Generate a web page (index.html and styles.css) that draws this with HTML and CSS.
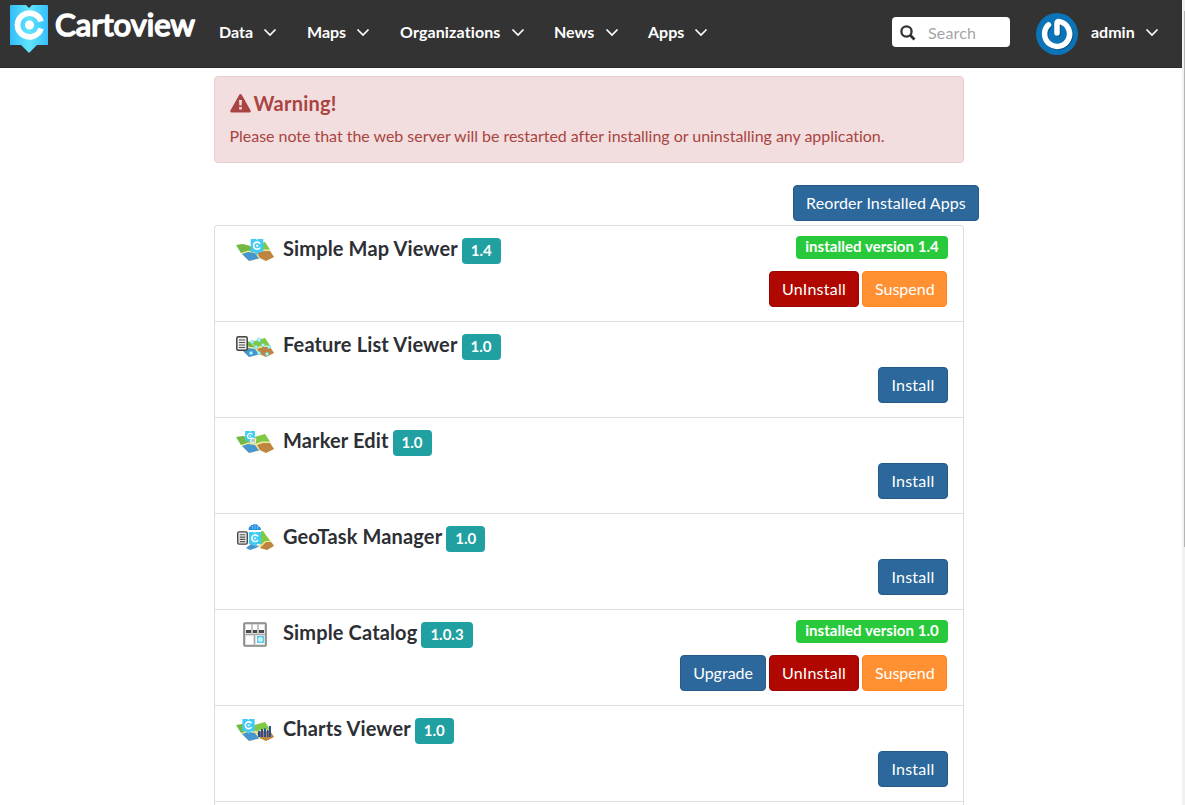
FILE: index.html
```html
<!DOCTYPE html>
<html lang="en">
<head>
<meta charset="utf-8">
<title>Cartoview</title>
<link rel="stylesheet" href="styles.css">
</head>
<body>
<svg class="defs" width="0" height="0">
  <defs>
    <linearGradient id="sky" x1="0" x2="1"><stop offset="0" stop-color="#32bdfa"/><stop offset=".5" stop-color="#61e4fc"/><stop offset="1" stop-color="#35bffb"/></linearGradient>
    <symbol id="chev" viewBox="0 0 14 9"><path d="M1.5 1.5 7 7l5.500-5.500" fill="none" stroke="#fff" stroke-width="1.700"/></symbol>
    <symbol id="pin" viewBox="0 0 38 48"><path d="M0 1Q0 0 1 0H16L19 3 22 0H37Q38 0 38 1V40H27L19 48 11 40H0Z" fill="url(#sky)"/><path d="M31 16.500A12 11.800 0 1 0 31 23.500" fill="none" stroke="#fff" stroke-width="5.800"/><circle cx="19.500" cy="20" r="4.500" fill="#fff"/></symbol>
    <symbol id="smallpin" viewBox="0 0 13 16"><path d="M0 0H5.500L6.500 1 7.500 0H13V13H9L6.500 16 4 13H0Z" fill="#3fcbf5"/><path d="M9.700 4.700A3.600 3.600 0 1 0 9.700 8.600" fill="none" stroke="#fff" stroke-width="1.700"/><circle cx="6.700" cy="6.700" r="1.200" fill="#e7fbff"/></symbol>
    <symbol id="map" viewBox="0 0 38 26"><path d="M1 7 7 6 14 8 29 4 38 19 30 23 23 20.500 13 23 5 15Z" fill="#f0e8a0"/><path d="M0 7 7 6 14 8 19 13.500 12 12.500 5 15Z" fill="#72b944"/><path d="M15 8 29 4 34 11.500 26 11.500 20 13.500Z" fill="#80c946"/><path d="M6 16 12 14 19 15 23 20.500 13 23Z" fill="#4595ce"/><path d="M21 15 27 13 34 13 38 19 30 23 24 20Z" fill="#bd8540"/></symbol>
    <symbol id="doc" viewBox="0 0 12 15"><rect x=".8" y=".8" width="10.400" height="13.400" rx="1.500" fill="#e9e9e9" stroke="#444" stroke-width="1.500"/><path d="M3 4H9M3 6.500H9M3 9H9M3 11.500H9" stroke="#555" stroke-width="1.200"/></symbol>
  </defs>
</svg>
<div class="page">
<div class="view">
  <header class="navbar">
    <a class="brand"><svg width="200" height="60" viewBox="0 0 200 60"><use href="#pin" x="10" y="5" width="38" height="48"/><text class="wordmark" x="55" y="35.500" textLength="140" lengthAdjust="spacingAndGlyphs">Cartoview</text></svg></a>
    <nav class="menu">
      <a class="item data">Data<svg class="chev"><use href="#chev"/></svg></a>
      <a class="item maps">Maps<svg class="chev"><use href="#chev"/></svg></a>
      <a class="item orgs">Organizations<svg class="chev"><use href="#chev"/></svg></a>
      <a class="item news">News<svg class="chev"><use href="#chev"/></svg></a>
      <a class="item">Apps<svg class="chev"><use href="#chev"/></svg></a>
    </nav>
    <div class="search"><svg width="16" height="16" viewBox="0 0 16 16"><circle cx="6.500" cy="6.500" r="5.100" fill="none" stroke="#333" stroke-width="2.300"/><path d="M10.300 10.300 14.500 14.500" stroke="#333" stroke-width="2.800"/></svg><span>Search</span></div>
    <svg class="avatar" viewBox="0 0 42 42"><circle cx="21" cy="21" r="21" fill="#0b74b8"/><path d="M12.500 11.800A12.500 12.500 0 1 0 25 9Q21 7.500 21 10.500V20" transform="translate(1 1)" fill="none" stroke="#07598f" stroke-width="5.500" stroke-linecap="round"/><path d="M12.500 11.800A12.500 12.500 0 1 0 25 9Q21 7.500 21 10.500V20" fill="none" stroke="#fff" stroke-width="5.500" stroke-linecap="round" stroke-linejoin="round"/></svg>
    <a class="item user">admin<svg class="chev"><use href="#chev"/></svg></a>
  </header>
  <main class="content">
    <section class="alert">
      <h4><svg width="21" height="19" viewBox="0 0 21 19"><path d="M9.300.8Q10.500-.6 11.700.8L20.600 16.500Q21 18.400 19.300 18.500H1.700Q0 18.400.4 16.500Z" fill="#a94442"/><path d="M9 6H12L11.600 11.500H9.400ZM9.200 13H11.800V15.500H9.200Z" fill="#f2dede"/></svg>Warning!</h4>
      <p>Please note that the web server will be restarted after installing or uninstalling any application.</p>
    </section>
    <div class="toolbar"><button class="btn primary reorder">Reorder Installed Apps</button></div>
    <ul class="apps">
      <li class="app">
        <svg class="icon" viewBox="0 0 38 30"><use href="#map" y="2" width="38" height="26"/><use href="#smallpin" x="14.500" y="3" width="13" height="16"/></svg>
        <h4>Simple Map Viewer</h4><span class="version">1.4</span>
        <div class="side"><span class="state">installed version 1.4</span><div class="actions managed"><button class="btn danger">UnInstall</button><button class="btn warn">Suspend</button></div></div>
      </li>
      <li class="app">
        <svg class="icon" viewBox="0 0 38 30"><use href="#map" y="2" width="38" height="26"/><g fill="#b6f5fa" stroke="#6dd3e4" stroke-width=".8"><circle cx="16" cy="10" r="1.600"/><circle cx="23" cy="8" r="1.800"/><circle cx="20" cy="15" r="1.600"/><circle cx="27" cy="13" r="1.600"/><circle cx="33" cy="15" r="1.600"/><circle cx="15" cy="21" r="1.600"/><circle cx="23" cy="21" r="1.600"/><circle cx="31" cy="22" r="1.600"/></g><use href="#doc" x="0" y="4" width="12" height="15"/></svg>
        <h4>Feature List Viewer</h4><span class="version">1.0</span>
        <div class="side"><div class="actions"><button class="btn primary install">Install</button></div></div>
      </li>
      <li class="app">
        <svg class="icon" viewBox="0 0 38 30"><use href="#map" y="2" width="38" height="26"/><use href="#smallpin" x="9" y="3" width="10" height="12"/><path d="M14 14 16 10 20 11 19 15Z" fill="#b9c9af" stroke="#f5f5f5"/></svg>
        <h4>Marker Edit</h4><span class="version">1.0</span>
        <div class="side"><div class="actions"><button class="btn primary install">Install</button></div></div>
      </li>
      <li class="app">
        <svg class="icon" viewBox="0 0 38 30"><path d="M25 7 27 7 38 21 31 26 22 23Z" fill="#f0e8a0"/><path d="M25 7 27 7 34 17 29 17 25 21Z" fill="#80c946"/><path d="M30 18H35L38 22 31 26 24 24Z" fill="#bd8540"/><path d="M10 24 15 20 23 22 20 24 14 26Z" fill="#4595ce"/><use href="#smallpin" x="13" y="7" width="12" height="17"/><path d="M12.500 6Q12.500 2.500 15 2V1H17V.3H21V1H22V2Q25 3 25 6Z" fill="#298de0"/><path d="M16.500 2V5M19 1V5M21.500 2V5" stroke="#a5d5ff" stroke-width=".7"/><use href="#doc" x="1" y="7" width="11" height="14"/></svg>
        <h4>GeoTask Manager</h4><span class="version">1.0</span>
        <div class="side"><div class="actions"><button class="btn primary install">Install</button></div></div>
      </li>
      <li class="app">
        <svg class="icon" viewBox="0 0 38 30"><rect x="8" y="3" width="22" height="23" rx="1" fill="#ddd" stroke="#808080" stroke-width="1.600"/><path d="M10 5h5v5h-5zM17 5h4v5h-4zM23 5h5v5h-5zM10 16h7v8h-7zM20 16h8v8h-8z" fill="#fff"/><path d="M10 10h5v3h-5zM17 10h4v3h-4zM23 10h5v3h-5z" fill="#4a4a4a"/><path d="M9 14.500H29M16 4V14M22 4V14M18.500 15V25" stroke="#aaa"/><rect x="21" y="16" width="7" height="7" fill="#55cbed"/><circle cx="24.500" cy="19.500" r="2" fill="#b6f4fc" stroke="#e6fcff" stroke-width=".8"/></svg>
        <h4>Simple Catalog</h4><span class="version">1.0.3</span>
        <div class="side"><span class="state">installed version 1.0</span><div class="actions managed"><button class="btn primary">Upgrade</button><button class="btn danger">UnInstall</button><button class="btn warn">Suspend</button></div></div>
      </li>
      <li class="app">
        <svg class="icon" viewBox="0 0 38 30"><use href="#map" y="2" width="38" height="26"/><use href="#smallpin" x="6" y="3" width="13" height="15"/><path d="M22 15h2.500v6h-2.500zM25 13h2v8h-2zM28 12.500h2v8.500h-2zM31 14h1.500v7h-1.500zM33 10h2v11h-2z" fill="#294e92"/></svg>
        <h4>Charts Viewer</h4><span class="version">1.0</span>
        <div class="side"><div class="actions"><button class="btn primary install">Install</button></div></div>
      </li>
      <li class="app"></li>
    </ul>
  </main>
</div>
<div class="scrollbar"><div class="thumb"></div></div>
</div>
</body>
</html>
```
FILE: styles.css
```css
* { box-sizing: border-box; }
body { margin: 0; font: 16px/24px Lato, sans-serif; color: #2c2f33; background: #fff; overflow: hidden; }
h4, p, ul { margin: 0; padding: 0; }
.defs { display: block; }
.page { display: flex; height: 805px; overflow: hidden; }
.view { width: 1182px; flex: none; }
.navbar { display: flex; height: 68px; background: #333; border-bottom: 1px solid #2b2b2b; align-items: flex-start; }
.brand { width: 219px; flex: none; }
.brand svg { display: block; }
.wordmark { font: 400 31px Lato, sans-serif; fill: #fff; stroke: #fff; stroke-width: 1.7; stroke-linejoin: round; }
.menu { display: flex; width: 673px; }
.item { display: flex; align-items: center; justify-content: space-between; height: 24px; margin-top: 20px; color: #fff; font-weight: 700; width: 60px; }
.data { width: 58px; margin-right: 30px; }
.maps { width: 63px; margin-right: 30px; }
.orgs { width: 125px; margin-right: 29px; letter-spacing: .12px; }
.news { width: 65px; margin-right: 29px; }
.chev { width: 14px; height: 9px; }
.search { display: flex; align-items: center; width: 118px; height: 30px; margin-top: 17px; padding: 2px 8px 0; gap: 12px; background: #fff; border-radius: 4px; color: #a5a5a5; }
.search span { line-height: 24px; letter-spacing: .15px; }
.avatar { width: 42px; height: 42px; margin: 13px 13px 0 26px; }
.user { width: 68px; }
.content { width: 750px; margin-left: 214px; padding-top: 8px; }
.alert { height: 87px; padding: 15px 15px 15px 14.5px; border: 1px solid #ebccd1; border-radius: 4px; background: #f2dede; color: #a94442; }
.alert h4 { display: flex; align-items: center; height: 22px; gap: 3px; font-size: 20px; line-height: 22px; letter-spacing: .25px; }
.alert p { margin-top: 10px; line-height: 24px; letter-spacing: -.025px; }
.toolbar { display: flex; justify-content: flex-end; margin: 22px -15px 4px 0; }
.btn { height: 36px; padding: 0 12px; border: 1px solid; border-radius: 4px; color: #fff; font: 16px/24px Lato, sans-serif; white-space: nowrap; }
.primary { background: #2c689c; border-color: #265a87; }
.reorder { width: 186px; letter-spacing: .1px; }
.install { width: 70px; letter-spacing: .25px; }
.danger { width: 90px; background: #b00800; border-color: #9b0700; letter-spacing: .25px; }
.warn { width: 85px; background: #ff9133; border-color: #ff841a; }
.apps { list-style: none; border: 1px solid #ddd; border-bottom: 0; border-radius: 4px 4px 0 0; }
.app { display: flex; align-items: flex-start; height: 96px; padding: 10px 15px; border-bottom: 1px solid #ddd; }
.icon { width: 38px; height: 30px; margin: 0 9px 0 6px; }
.app h4 { font-size: 20px; line-height: 24px; letter-spacing: .14px; }
.version { height: 26px; margin: 2px 0 0 4px; padding: 0 9px; border-radius: 4px; background: #20a0a0; color: #fff; font-size: 15px; font-weight: 700; line-height: 25px; }
.side { display: flex; flex-direction: column; align-items: flex-end; height: 71px; margin-left: auto; }
.state { width: 152px; height: 23px; border-radius: 4px; background: #28ca3c; color: #fff; font-size: 15px; font-weight: 700; line-height: 21px; text-align: center; letter-spacing: .04px; }
.actions { display: flex; gap: 3px; margin-top: auto; }
.managed { margin-right: 1px; }
.scrollbar { width: 3px; padding: 11px 0 0 2px; background: #f1f1f1; }
.thumb { height: 536px; background: #b5b5b5; }
```
